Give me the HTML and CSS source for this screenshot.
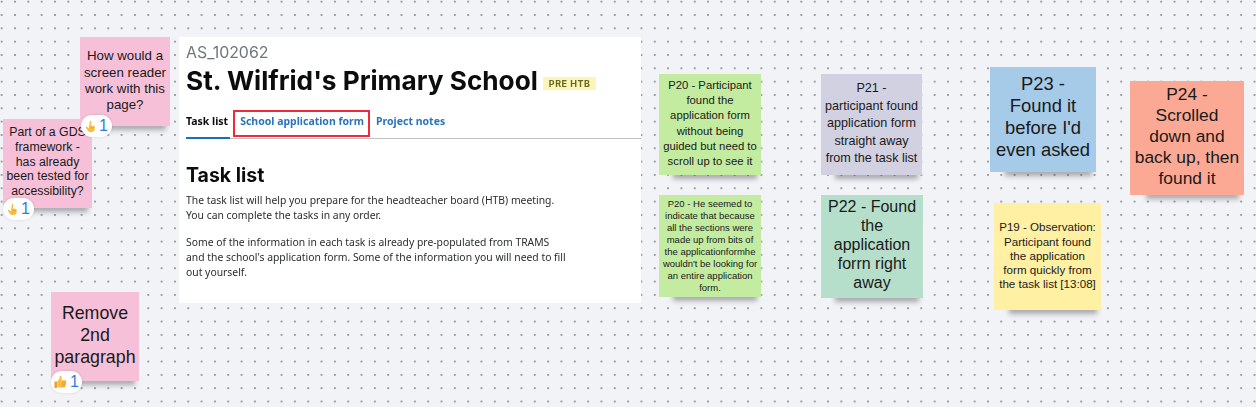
FILE: index.html
```html
<!DOCTYPE html>
<html lang="en">

<head>
    <meta charset="UTF-8">
    <meta name="viewport" content="width=device-width, initial-scale=1.0">
    <title>Research board</title>
    <link rel="stylesheet" href="styles.css">
</head>

<body>
    <div class="board">

        <div class="note pink note-gds">
            <p>Part of a GDS<br>framework -<br>has already<br>been tested for<br>accessibility?</p>
            <div class="reaction">
                <svg viewBox="0 0 12 14" class="hand"><path d="M5.300 1.200c.2-.9 1.700-.7 1.600.3l-.5 4.300 2.700.3c1.200.1 1.700.8 1.600 1.900l-.3 2.300c-.2 1.500-1.200 2.600-2.800 2.600H5.400c-1.200 0-2-.5-2.500-1.500L1 8.300c-.4-.9.6-1.500 1.300-.9l1.900 1.700z" fill="#f9bd3e"/><path d="M6.700 7.600v1.500M8.800 7.900v1.300" stroke="#e0952a" stroke-width=".8" fill="none"/></svg>
                <span>1</span>
            </div>
        </div>

        <div class="note pink note-reader">
            <p>How would a<br>screen reader<br>work with this<br>page?</p>
            <div class="reaction">
                <svg viewBox="0 0 12 14" class="hand"><path d="M5.300 1.200c.2-.9 1.700-.7 1.600.3l-.5 4.300 2.700.3c1.200.1 1.700.8 1.600 1.900l-.3 2.300c-.2 1.500-1.200 2.600-2.800 2.600H5.400c-1.200 0-2-.5-2.500-1.500L1 8.300c-.4-.9.6-1.500 1.300-.9l1.900 1.700z" fill="#f9bd3e"/><path d="M6.700 7.600v1.500M8.800 7.900v1.300" stroke="#e0952a" stroke-width=".8" fill="none"/></svg>
                <span>1</span>
            </div>
        </div>

        <div class="note pink note-remove">
            <p>Remove<br>2nd<br>paragraph</p>
            <div class="reaction">
                <svg viewBox="0 0 14 14" class="thumb"><path d="M.5 6.500h2.700v7H.5z" fill="#ee9a3a"/><path d="M3.600 6.300 6 3.600V1.200c0-1 1.900-.8 2.200.6.200 1 0 2.300-.3 3.300h4.300c1.300 0 1.500 1.600.6 2 .8.500.6 1.800-.2 2.100.5.600.3 1.700-.5 2 .2.900-.3 1.700-1.200 1.700H6c-1.100 0-1.800-.3-2.400-.8z" fill="#f9bd3e"/><path d="M8.500 7.200h4M8.500 9.300h3.800M8.500 11.400h3" stroke="#e58f2c" stroke-width=".8" fill="none"/></svg>
                <span>1</span>
            </div>
        </div>

        <div class="page">
            <div class="page-ref">AS_102062</div>
            <div class="page-title">
                <h1>St. Wilfrid's Primary School</h1>
                <span class="tag">PRE HTB</span>
            </div>
            <div class="tabs">
                <span class="tab current">Task list</span>
                <span class="tab marked">School application form</span>
                <span class="tab">Project notes</span>
            </div>
            <h2>Task list</h2>
            <p>The task list will help you prepare for the headteacher board (HTB) meeting.<br>You can complete the tasks in any order.</p>
            <p>Some of the information in each task is already pre-populated from TRAMS<br>and the school's application form. Some of the information you will need to fill<br>out yourself.</p>
        </div>

        <div class="note green note-p20"><p>P20 - Participant<br>found the<br>application form<br>without being<br>guided but need to<br>scroll up to see it</p></div>
        <div class="note green note-p20b"><p>P20 - He seemed to<br>indicate that because<br>all the sections were<br>made up from bits of<br>the applicationformhe<br>wouldn't be looking for<br>an entire application<br>form.</p></div>
        <div class="note lilac note-p21"><p>P21 -<br>participant found<br>application form<br>straight away<br>from the task list</p></div>
        <div class="note teal note-p22"><p>P22 - Found<br>the<br>application<br>forrn right<br>away</p></div>
        <div class="note blue note-p23"><p>P23 -<br>Found it<br>before I'd<br>even asked</p></div>
        <div class="note salmon note-p24"><p>P24 -<br>Scrolled<br>down and<br>back up, then<br>found it</p></div>
        <div class="note yellow note-p19"><p>P19 - Observation:<br>Participant found<br>the application<br>form quickly from<br>the task list [13:08]</p></div>

    </div>
</body>
</html>
```

FILE: styles.css
```css
body {
    margin: 0;
    background-color: #f2f3f6;
    font-family: "Liberation Sans", Arial, sans-serif;
    color: #1a1a1a;
}

.board {
    position: relative;
    isolation: isolate;
    width: 1256px;
    height: 407px;
    overflow: hidden;
    background-image:
        radial-gradient(circle at center, #989ca6 0, #989ca6 0.7px, transparent 1.2px);
    background-size: 13.333px 13.333px;
    background-position: -5px -5px;
}

.note {
    position: absolute;
    box-sizing: border-box;
    display: flex;
    align-items: center;
    justify-content: center;
    text-align: center;
}

/* the soft shadow only shows under the bottom edge */
.note::before {
    content: "";
    position: absolute;
    left: 14%;
    right: 4%;
    bottom: 1px;
    height: 8px;
    z-index: -1;
    box-shadow: 0 5px 5px rgba(60, 60, 70, 0.4);
}

.note p {
    margin: 0;
}

.pink { background-color: #f5c0d8; }
.green { background-color: #c3eca0; }
.lilac { background-color: #d2d1e2; }
.teal { background-color: #b5decb; }
.blue { background-color: #a6cbe9; }
.salmon { background-color: #fba994; }
.yellow { background-color: #fff0a3; }

.note-reader { left: 80px; top: 37px; width: 90px; height: 89px; padding-bottom: 1px; font-size: 13.300px; line-height: 16.300px; }
.note-gds { left: 3px; top: 119px; width: 89px; height: 89px; padding-bottom: 3px; font-size: 12.300px; line-height: 14.700px; }
.note-remove { left: 51px; top: 292px; width: 88px; height: 89px; padding-bottom: 3px; font-size: 17.800px; line-height: 22px; }
.note-p20 { left: 659px; top: 74px; width: 102px; height: 101px; padding-bottom: 2px; font-size: 11.300px; line-height: 15.200px; }
.note-p20b { left: 659px; top: 195px; width: 102px; height: 102px; padding-bottom: 1px; font-size: 9.500px; line-height: 12px; }
.note-p21 { left: 821px; top: 74px; width: 101px; height: 101px; padding-bottom: 1px; font-size: 12.600px; line-height: 17.400px; }
.note-p22 { left: 821px; top: 195px; width: 102px; height: 103px; padding-bottom: 4px; font-size: 16px; line-height: 19px; }
.note-p23 { left: 990px; top: 67px; width: 106px; height: 105px; padding-bottom: 5px; font-size: 18.400px; line-height: 22.200px; }
.note-p24 { left: 1130px; top: 81px; width: 114px; height: 114px; padding-bottom: 3px; font-size: 17.400px; line-height: 21px; }
.note-p19 { left: 994px; top: 203px; width: 107px; height: 107px; padding-bottom: 1px; font-size: 11.600px; line-height: 14.300px; }

.reaction {
    position: absolute;
    left: 1px;
    bottom: -11px;
    box-sizing: border-box;
    display: flex;
    align-items: center;
    justify-content: center;
    gap: 3px;
    width: 31px;
    height: 22px;
    background-color: #fff;
    border-radius: 11px;
    color: #2d7de0;
    font-size: 16px;
    box-shadow: 0 0 3px rgba(0, 0, 0, 0.12);
}

.note-gds .reaction { left: 0; bottom: -12px; }
.note-remove .reaction { left: 0; bottom: -12px; }

.hand {
    width: 11px;
    height: 13px;
}

.thumb {
    width: 13px;
    height: 14px;
}

.page {
    position: absolute;
    left: 179px;
    top: 37px;
    width: 462px;
    height: 266px;
    box-sizing: border-box;
    padding: 7px 0 0 7px;
    background-color: #fff;
    font-family: "Noto Sans", sans-serif;
    filter: blur(0.4px);
}

.page-ref {
    color: #6f777b;
    font-family: "Inter", sans-serif;
    font-size: 15.900px;
    line-height: 18px;
}

.page-title {
    display: flex;
    align-items: center;
    gap: 5px;
    margin-top: 3px;
}

h1 {
    margin: 0;
    font-family: "Inter", sans-serif;
    font-size: 26.200px;
    line-height: 32px;
    font-weight: 700;
    color: #0b0c0c;
}

.tag {
    padding: 1px 6px;
    margin-top: 4px;
    background-color: #fbf6b8;
    color: #6b6420;
    font-family: "Inter", sans-serif;
    font-size: 9px;
    line-height: 11px;
    font-weight: 700;
    letter-spacing: 0.5px;
}

.tabs {
    display: flex;
    align-items: flex-end;
    height: 37px;
    margin-top: 4px;
    border-bottom: 1px solid #bfc1c3;
}

.tab {
    padding: 0 2px 10px 2px;
    margin-right: 4px;
    color: #2a74bb;
    font-size: 10.500px;
    font-weight: 700;
    line-height: 14px;
}

.tab.current {
    padding: 0 2px 9px 0;
    color: #0b0c0c;
    border-bottom: 2px solid #1d70b8;
    margin-bottom: -1px;
}

.tab.marked {
    padding: 3px 5px 8px 6px;
    margin-right: 5px;
    margin-bottom: 2px;
    outline: 2px solid #ee2b3b;
    outline-offset: -1px;
}

h2 {
    margin: 24px 0 6px 0;
    font-family: "Inter", sans-serif;
    font-size: 19.500px;
    line-height: 24px;
    font-weight: 700;
    color: #0b0c0c;
}

.page p {
    margin: 0 0 13px 0;
    color: #2b2d2e;
    font-size: 10.370px;
    line-height: 14.700px;
}
```
